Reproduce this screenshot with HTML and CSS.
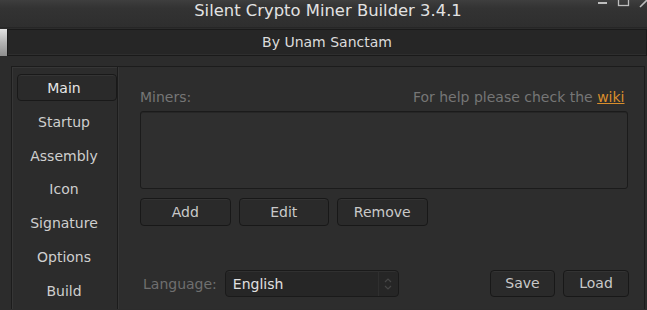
FILE: index.html
```html
<!DOCTYPE html>
<html>
<head>
<meta charset="utf-8">
<title>Silent Crypto Miner Builder</title>
<link rel="stylesheet" href="styles.css">
</head>
<body>
<div class="window">
  <div class="titlebar">
    <div class="tb-spacer"></div>
    <div class="tb-title">Silent Crypto Miner Builder 3.4.1</div>
    <div class="tb-controls">
      <svg width="57" height="10" viewBox="0 0 57 10">
        <line x1="8" y1="3" x2="17" y2="3" stroke="#bdbdbd" stroke-width="2"/>
        <rect x="28.5" y="-5" width="10" height="10.5" fill="none" stroke="#bdbdbd" stroke-width="1.3"/>
        <line x1="50" y1="7" x2="57" y2="0" stroke="#bdbdbd" stroke-width="1.6"/>
      </svg>
    </div>
  </div>
  <div class="header">
    <div class="grip"></div>
    <div class="bar">By Unam Sanctam</div>
  </div>
  <div class="frame">
    <div class="tabs">
      <div class="tab active">Main</div>
      <div class="tab">Startup</div>
      <div class="tab">Assembly</div>
      <div class="tab">Icon</div>
      <div class="tab">Signature</div>
      <div class="tab">Options</div>
      <div class="tab">Build</div>
    </div>
    <div class="content">
      <div class="miners-row">
        <span class="dim">Miners:</span>
        <span class="dim">For help please check the <a class="wiki" href="#">wiki</a></span>
      </div>
      <div class="listbox"></div>
      <div class="btn-row">
        <div class="btn">Add</div>
        <div class="btn">Edit</div>
        <div class="btn">Remove</div>
      </div>
      <div class="bottom-row">
        <span class="lang-label">Language:</span>
        <div class="combo">
          <span class="combo-text">English</span>
          <span class="spin">
            <svg width="8" height="14" viewBox="0 0 8 14">
              <path d="M1 5 L4 2 L7 5" fill="none" stroke="#464646" stroke-width="1.2"/>
              <path d="M1 9 L4 12 L7 9" fill="none" stroke="#464646" stroke-width="1.2"/>
            </svg>
          </span>
        </div>
        <div class="grow"></div>
        <div class="btn small save">Save</div>
        <div class="btn small load">Load</div>
      </div>
    </div>
  </div>
</div>
</body>
</html>
```

FILE: styles.css
```css
* { box-sizing: border-box; }
html, body { margin: 0; padding: 0; }
body {
  width: 647px;
  height: 310px;
  overflow: hidden;
  background: #2c2c2c;
  font-family: "DejaVu Sans", Verdana, sans-serif;
  font-size: 14px;
  color: #d0d0d0;
}
.window { width: 647px; height: 310px; overflow: hidden; }

.titlebar {
  height: 28px;
  display: grid;
  grid-template-columns: 1fr auto 1fr;
  padding-left: 9px;
  background: linear-gradient(#3e3e3e 0px, #333333 8px, #2e2e2e 28px);
  border-bottom: 1px solid #262626;
}
.tb-title {
  font-size: 16.4px;
  line-height: 22px;
  color: #e2e2e2;
  white-space: nowrap;
}
.tb-controls {
  justify-self: end;
  display: flex;
  align-items: flex-start;
}
.tb-controls svg { display: block; }

.header {
  display: flex;
  height: 27px;
  margin-top: 1px;
}
.grip {
  width: 7px;
  background: linear-gradient(#e2e2e2, #b4b4b4 50%, #8e8e8e);
}
.bar {
  flex: 1;
  background: #262626;
  border: 1px solid #1a1a1a;
  box-shadow: inset 0 -1px 0 #2e2e2e;
  text-align: center;
  line-height: 25px;
  color: #dcdcdc;
}

.frame {
  display: flex;
  margin: 10px 0 0 11px;
  width: 634px;
  height: 243px;
  border: 1px solid #1c1c1c;
  border-bottom: none;
  box-shadow: inset 1px 1px 0 #363636;
}
.tabs {
  width: 106px;
  padding: 7px 0 0 5px;
  border-right: 1px solid #1c1c1c;
  display: flex;
  flex-direction: column;
  gap: 6.75px;
}
.tab {
  height: 27px;
  width: 100px;
  line-height: 26px;
  padding-right: 6px;
  text-align: center;
  border: 1px solid transparent;
  color: #cfcfcf;
}
.tab.active {
  background: #2a2a2a;
  border-color: #191919;
  border-radius: 4px;
  box-shadow: inset 0 1px 0 #343434;
  color: #e6e6e6;
}

.content {
  flex: 1;
  border-left: 1px solid #353535;
  padding: 20px 16.5px 0 21px;
  background: #2d2d2d;
}
.miners-row {
  display: flex;
  justify-content: space-between;
  height: 20px;
  line-height: 20px;
  padding-right: 3px;
}
.dim { color: #767676; }
.wiki {
  color: #d98e2c;
  text-decoration: underline;
}
.listbox {
  margin-top: 4px;
  height: 78px;
  background: #2f2f2f;
  border: 1px solid #1b1b1b;
  border-radius: 3px;
  box-shadow: inset 0 1px 0 #262626;
}
.btn-row {
  margin-top: 9px;
  display: grid;
  grid-template-columns: 90.5px 90.5px 90.5px;
  gap: 8px;
}
.btn {
  height: 28px;
  line-height: 26px;
  text-align: center;
  background: #2a2a2a;
  border: 1px solid #181818;
  border-radius: 4px;
  box-shadow: inset 0 1px 0 #333333;
  color: #c9c9c9;
}
.bottom-row {
  margin-top: 44px;
  display: flex;
  align-items: center;
  height: 27px;
}
.lang-label {
  color: #6f6f6f;
  padding-left: 3px;
}
.combo {
  margin-left: 8px;
  width: 174px;
  height: 27px;
  display: flex;
  align-items: center;
  background: #262626;
  border: 1px solid #1a1a1a;
  border-radius: 4px;
  box-shadow: inset 0 1px 0 #303030;
}
.combo-text {
  flex: 1;
  padding-left: 7px;
  color: #e0e0e0;
}
.spin {
  width: 20px;
  height: 100%;
  display: flex;
  align-items: center;
  justify-content: center;
  border-left: 1px solid #2f2f2f;
}
.spin svg { display: block; }
.grow { flex: 1; }
.btn.small { height: 27px; line-height: 25px; }
.save { width: 65px; margin-right: 8px; }
.load { width: 66px; margin-right: -1.5px; }
```
